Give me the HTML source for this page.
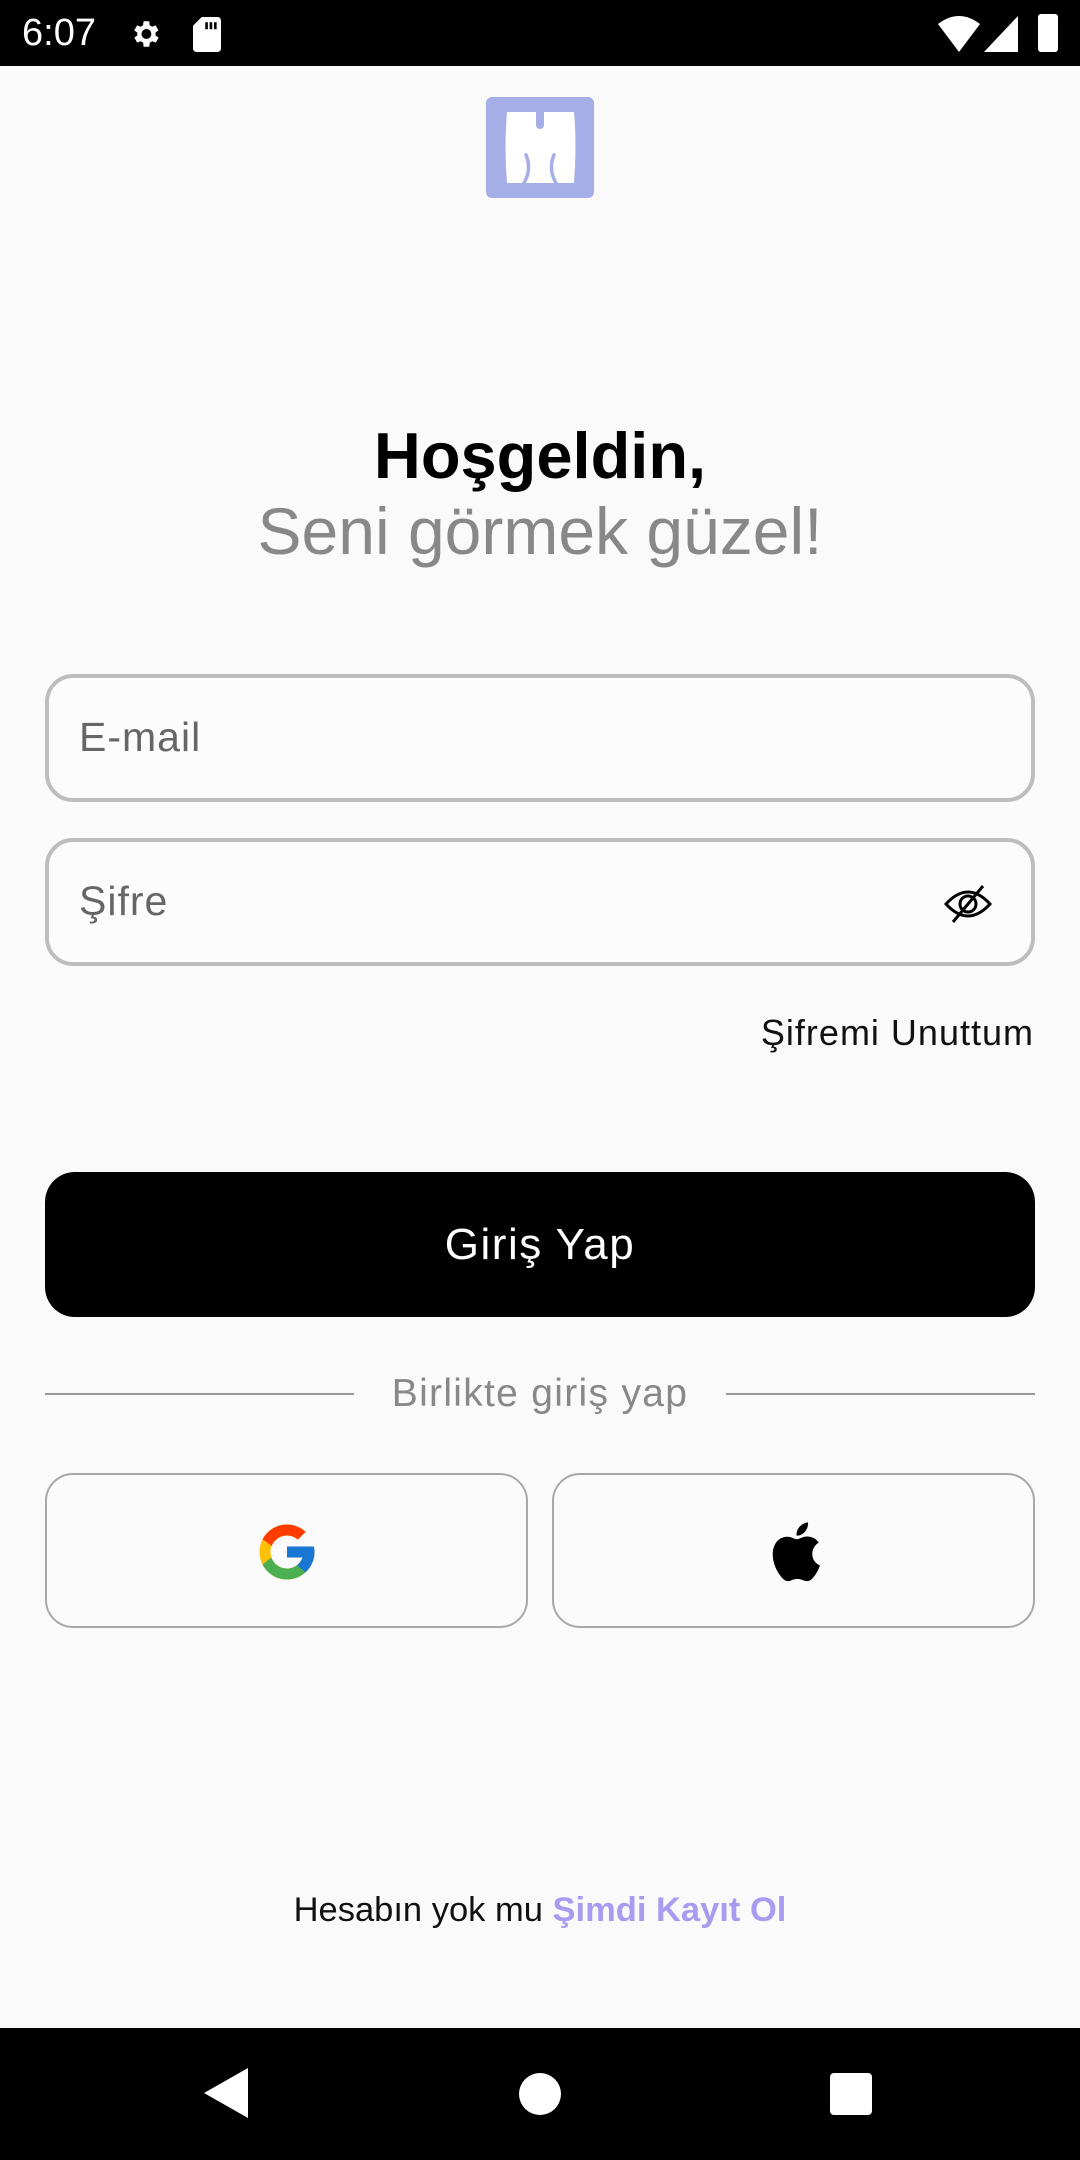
<!DOCTYPE html>
<html><head><meta charset="utf-8"><style>
*{margin:0;padding:0;box-sizing:border-box}
body{width:1080px;height:2160px;background:#fafafa;font-family:"Liberation Sans",sans-serif;position:relative;overflow:hidden}
.abs{position:absolute}
.sb{top:0;left:0;width:1080px;height:66px;background:#000;color:#fff}
.nav{bottom:0;left:0;width:1080px;height:132px;background:#000}
.field{left:45px;width:990px;height:128px;border:4px solid #bdbdbd;border-radius:28px;background:#fcfcfc}
.field span{position:absolute;left:30px;top:36px;font-size:41px;letter-spacing:1px;color:#666}
.soc{top:1473px;height:155px;border:2.5px solid #a8a8a8;border-radius:28px;background:#fbfbfb}
</style></head><body>
<div class="abs sb">
<div class="abs" style="left:22px;top:12px;font-size:38px">6:07</div>
<svg class="abs" style="left:128px;top:17px" width="34" height="34" viewBox="0 0 24 24"><path fill="#fff" d="M19.4 13a7.5 7.5 0 0 0 0-2l2.1-1.6-2-3.5-2.5 1a7 7 0 0 0-1.7-1L15 3h-4l-.4 2.9a7 7 0 0 0-1.7 1l-2.5-1-2 3.5L6.6 11a7.5 7.5 0 0 0 0 2l-2.1 1.6 2 3.5 2.5-1a7 7 0 0 0 1.7 1L11 21h4l.4-2.9a7 7 0 0 0 1.7-1l2.5 1 2-3.5zM13 15.5a3.5 3.5 0 1 1 0-7 3.5 3.5 0 0 1 0 7z"/></svg>
<svg class="abs" style="left:193px;top:17px" width="28" height="35" viewBox="0 0 16 20"><path fill="#fff" d="M5 0h9a2 2 0 0 1 2 2v16a2 2 0 0 1-2 2H2a2 2 0 0 1-2-2V5z"/><path fill="#000" d="M7 3h1.5v4H7zM9.5 3H11v4H9.5zM12 3h1.5v4H12z"/></svg>
<svg class="abs" style="left:938px;top:16px" width="42" height="36" viewBox="0 0 42 36"><path fill="#fff" d="M0 8Q21-8 42 8L21 36z"/></svg>
<svg class="abs" style="left:984px;top:16px" width="34" height="36" viewBox="0 0 34 36"><path fill="#fff" d="M34 0V36H0z"/></svg>
<div class="abs" style="left:1038px;top:14px;width:20px;height:38px;background:#fff;border-radius:3px"></div>
</div>
<svg class="abs" style="left:486px;top:97px" width="108" height="101" viewBox="0 0 108 101"><rect width="108" height="101" rx="6" fill="#a6aee8"/><path fill="#fff" d="M21 15H50V28A4 4 0 0 0 58 28V15H88Q91 50 88 86H21Q18 50 21 15z"/><path d="M40 58Q46 72 38 86M68 58Q62 72 70 86" fill="none" stroke="#a6aee8" stroke-width="3.5" stroke-linecap="round"/></svg>
<div class="abs" style="left:0;width:1080px;top:418px;text-align:center;font-size:65px;font-weight:bold;color:#000">Hoşgeldin,</div>
<div class="abs" style="left:0;width:1080px;top:493px;text-align:center;font-size:66px;color:#888">Seni görmek güzel!</div>
<div class="abs field" style="top:674px"><span>E-mail</span></div>
<div class="abs field" style="top:838px"><span>Şifre</span>
<svg class="abs" style="right:38px;top:42px" width="50" height="40" viewBox="0 0 50 40"><path d="M3 20Q25-4 47 20Q25 44 3 20z" fill="none" stroke="#000" stroke-width="3"/><circle cx="25" cy="20" r="8" fill="none" stroke="#000" stroke-width="3"/><path d="M10 38L40 2" stroke="#000" stroke-width="3"/></svg></div>
<div class="abs" style="right:46px;top:1012px;font-size:36px;letter-spacing:1px;color:#111">Şifremi Unuttum</div>
<div class="abs" style="left:45px;top:1172px;width:990px;height:145px;background:#000;border-radius:30px;color:#fff;font-size:44px;letter-spacing:1.5px;text-align:center;line-height:145px">Giriş Yap</div>
<div class="abs" style="left:45px;top:1393px;width:309px;height:2px;background:#999"></div>
<div class="abs" style="left:726px;top:1393px;width:309px;height:2px;background:#999"></div>
<div class="abs" style="left:0;width:1080px;top:1372px;text-align:center;font-size:39px;letter-spacing:1.3px;color:#888">Birlikte giriş yap</div>
<div class="abs soc" style="left:45px;width:483px">
<svg class="abs" style="left:207px;top:44px" width="66" height="66" viewBox="0 0 48 48"><path fill="#FFC107" d="M43.6 20H24v8h11.3C33.7 32.7 29.3 36 24 36c-6.6 0-12-5.4-12-12s5.4-12 12-12c3.1 0 5.8 1.2 7.9 3l5.7-5.7C34 6.1 29.3 4 24 4 13 4 4 13 4 24s9 20 20 20 20-9 20-20c0-1.3-.1-2.7-.4-4z"/><path fill="#FF3D00" d="M6.3 14.7l6.6 4.8C14.7 15.1 19 12 24 12c3.1 0 5.8 1.2 7.9 3l5.7-5.7C34 6.1 29.3 4 24 4 16.3 4 9.7 8.3 6.3 14.7z"/><path fill="#4CAF50" d="M24 44c5.2 0 9.9-2 13.4-5.2l-6.2-5.2C29.2 35.1 26.7 36 24 36c-5.2 0-9.6-3.3-11.3-8l-6.5 5C9.5 39.6 16.2 44 24 44z"/><path fill="#1976D2" d="M43.6 20H24v8h11.3c-.8 2.2-2.2 4.2-4.1 5.6l6.2 5.2C37 39.2 44 34 44 24c0-1.3-.1-2.7-.4-4z"/></svg></div>
<div class="abs soc" style="left:552px;width:483px">
<svg class="abs" style="left:213px;top:44px" width="56" height="66" viewBox="0 0 24 29"><path fill="#000" d="M19.6 15.3c0-3.3 2.7-4.9 2.8-5-1.5-2.2-3.9-2.5-4.7-2.6-2-.2-3.9 1.2-4.9 1.2s-2.6-1.2-4.2-1.1C6.4 7.8 4.4 9 3.3 11c-2.3 4-.6 9.8 1.6 13 1.1 1.6 2.4 3.3 4 3.3 1.6-.1 2.2-1 4.2-1s2.5 1 4.2 1c1.700 0 2.8-1.6 3.9-3.2 1.2-1.8 1.7-3.6 1.8-3.7-.1 0-3.4-1.3-3.4-5.1zM16.4 5.6c.9-1.1 1.5-2.6 1.3-4.1-1.3.1-2.8.9-3.7 1.900-.8.9-1.5 2.5-1.3 3.9 1.4.1 2.8-.7 3.7-1.7z"/></svg></div>
<div class="abs" style="left:0;width:1080px;top:1891px;text-align:center;font-size:34.5px;color:#111">Hesabın yok mu <b style="color:#a99cf0">Şimdi Kayıt Ol</b></div>
<div class="abs nav">
<svg class="abs" style="left:204px;top:40px" width="44" height="50" viewBox="0 0 44 50"><path fill="#fff" d="M44 0V50L0 25z"/></svg>
<div class="abs" style="left:519px;top:45px;width:42px;height:42px;border-radius:50%;background:#fff"></div>
<div class="abs" style="left:830px;top:45px;width:42px;height:42px;border-radius:4px;background:#fff"></div>
</div>
</body></html>
